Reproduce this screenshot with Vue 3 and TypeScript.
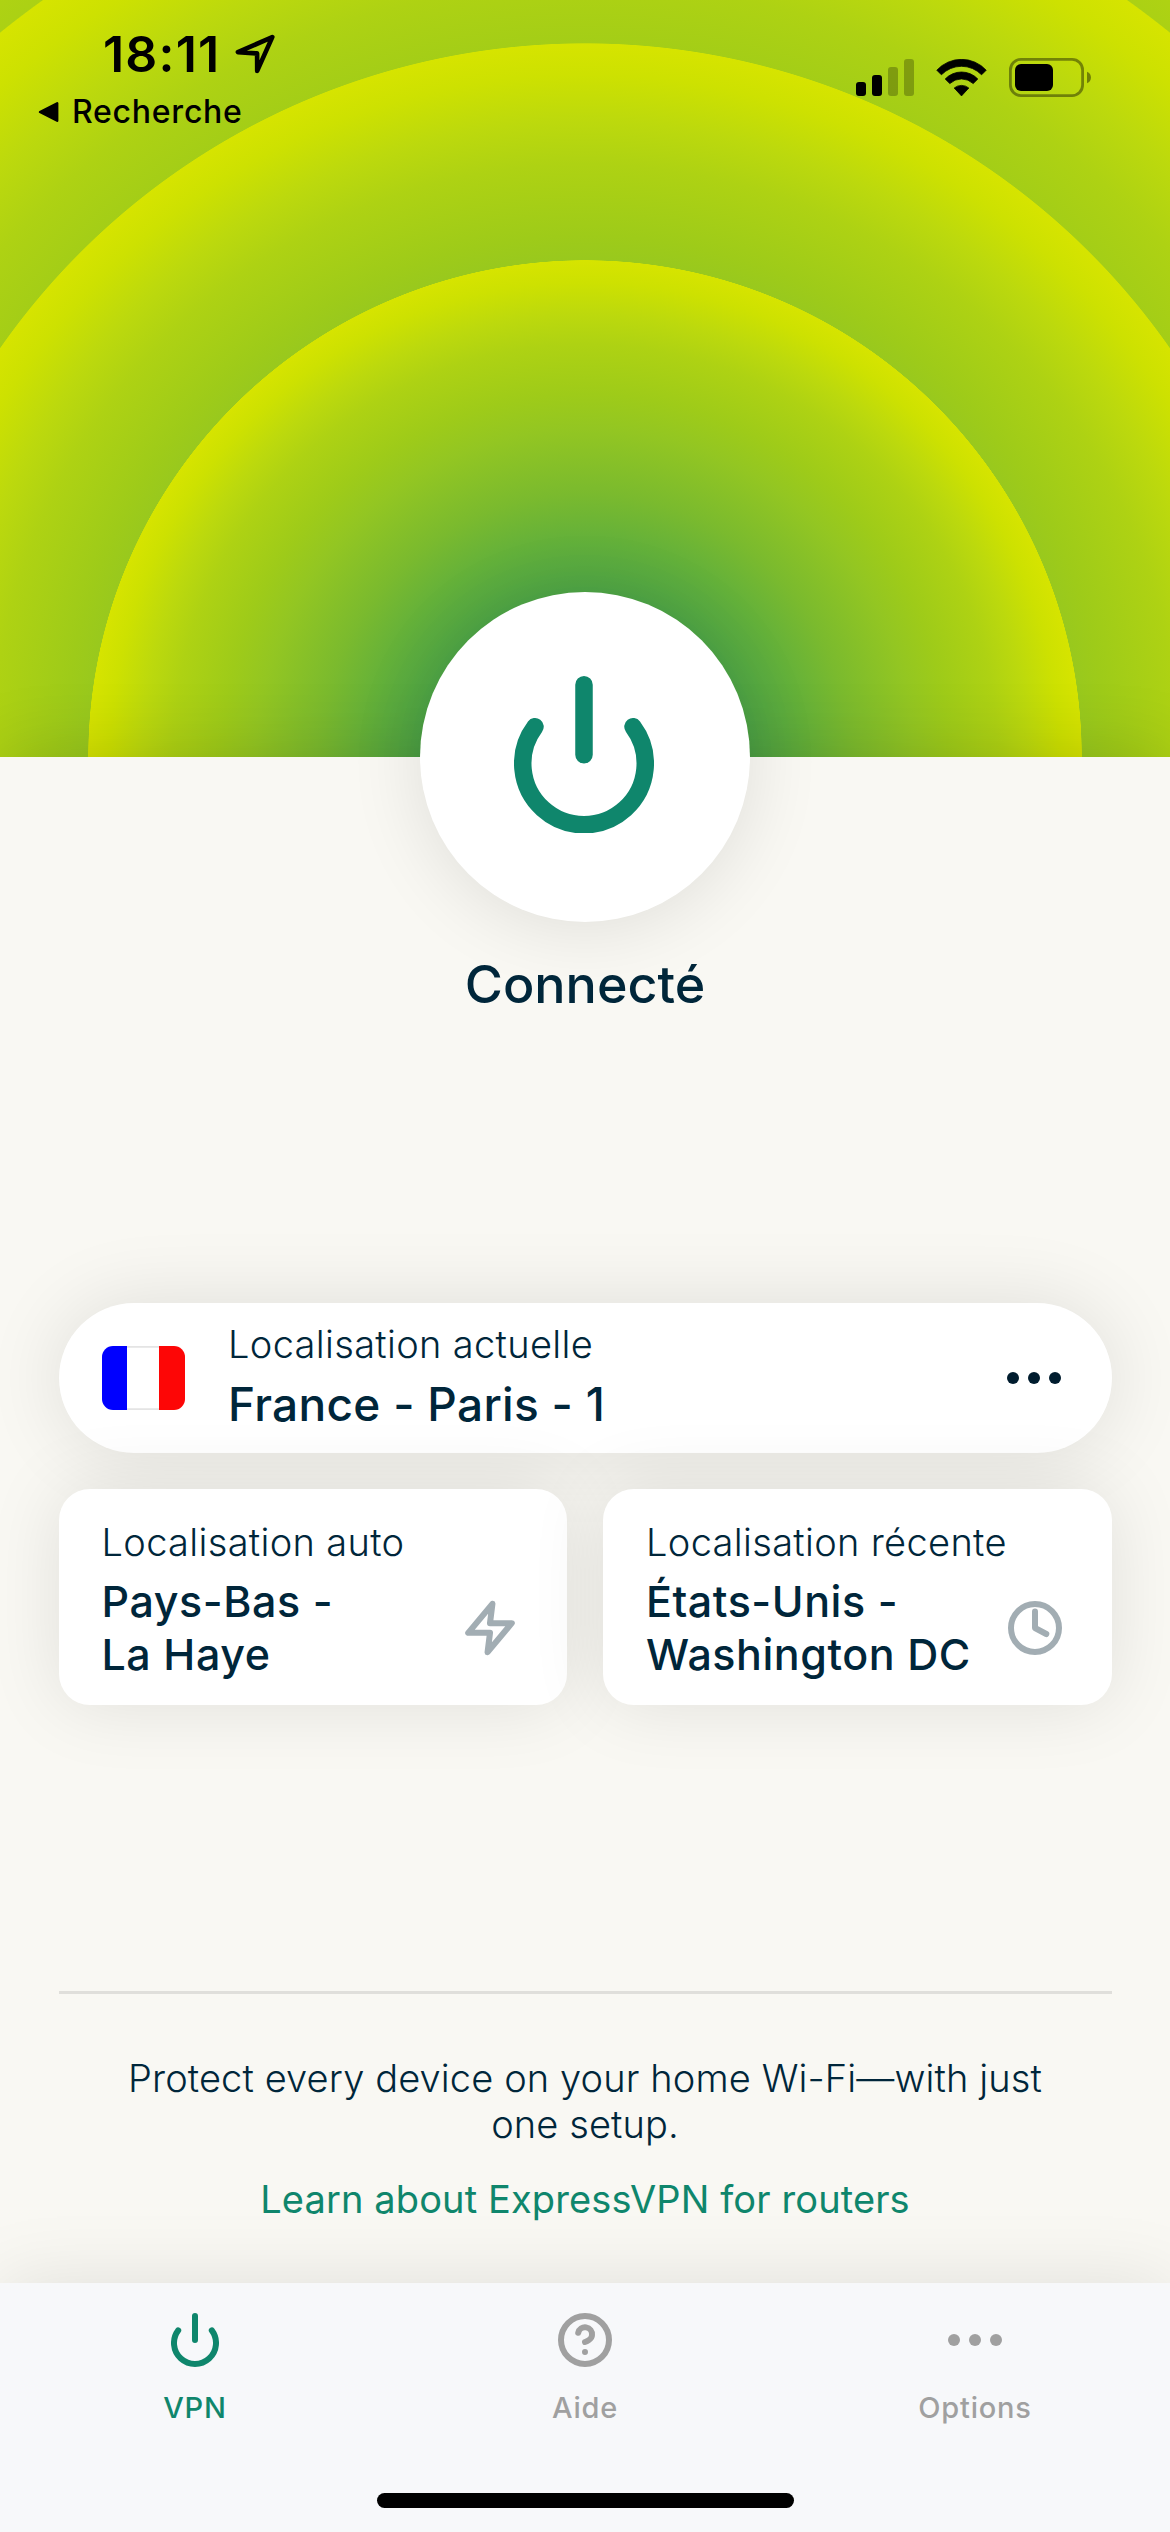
<script setup lang="ts">
interface Shortcut {
  label: string
  lines: string[]
  icon: 'bolt' | 'clock'
}

interface Tab {
  label: string
  icon: 'power' | 'help' | 'dots'
  active: boolean
}

const shortcuts: Shortcut[] = [
  { label: 'Localisation auto', lines: ['Pays-Bas -', 'La Haye'], icon: 'bolt' },
  { label: 'Localisation récente', lines: ['États-Unis -', 'Washington DC'], icon: 'clock' },
]

const tabs: Tab[] = [
  { label: 'VPN', icon: 'power', active: true },
  { label: 'Aide', icon: 'help', active: false },
  { label: 'Options', icon: 'dots', active: false },
]
</script>

<template>
  <div class="screen">
    <header class="hero">
      <div class="status-left">
        <div class="clock-row">
          <span class="time">18:11</span>
          <svg class="arrow" width="44" height="44" viewBox="0 0 44 44">
            <path d="M39.3 5.1 4.9 20.2 24.1 21.4 24.2 38.9Z" fill="none" stroke="#000" stroke-width="4.6" stroke-linejoin="round" />
          </svg>
        </div>
        <div class="back-row">
          <svg width="22" height="22" viewBox="0 0 22 22">
            <path d="M2 11 19.2 2.2V19.8Z" fill="#000" stroke="#000" stroke-width="2.4" stroke-linejoin="round" />
          </svg>
          <span class="back">Recherche</span>
        </div>
      </div>
      <div class="status-right">
        <svg width="58" height="37" viewBox="0 0 58 37">
          <rect x="0" y="23" width="10" height="14" rx="3" />
          <rect x="16" y="16" width="10" height="21" rx="3" />
          <rect x="32" y="8" width="10" height="29" rx="3" opacity=".25" />
          <rect x="48" y="0" width="10" height="37" rx="3" opacity=".25" />
        </svg>
        <svg class="wifi" width="51" height="38" viewBox="0 0 51 38">
          <path d="M.8 11.2A33.5 33.5 0 0 1 50.2 11.2L45.6 15.8A28 28 0 0 0 5.4 15.8Z" stroke="#000" stroke-width=".8" stroke-linejoin="round" />
          <path d="M9.2 20A22.5 22.5 0 0 1 41.8 20L37.2 24.6A17 17 0 0 0 13.8 24.6Z" stroke="#000" stroke-width=".8" stroke-linejoin="round" />
          <path d="M18.2 29A11.5 11.5 0 0 1 32.8 29L25.5 36.9Z" stroke="#000" stroke-width=".8" stroke-linejoin="round" />
        </svg>
        <svg class="battery" width="82" height="39" viewBox="0 0 82 39">
          <rect x="1.4" y="1.4" width="72.2" height="36.2" rx="10.5" fill="none" stroke="#000" stroke-opacity=".4" stroke-width="2.8" />
          <rect x="6" y="6" width="38" height="27" rx="6" />
          <path d="M78 13.7C83.3 15.5 83.3 23.5 78 25.3Z" opacity=".42" />
        </svg>
      </div>
    </header>

    <main class="body">
      <button class="connect" type="button" aria-label="VPN">
        <svg width="140" height="157.5" viewBox="0 0 48 54">
          <path d="M24 3V27M7.2 17.4A21 21 0 1 0 40.8 17.4" />
        </svg>
      </button>
      <h1 class="state">Connecté</h1>

      <section class="current">
        <svg class="flag" width="83" height="64" viewBox="0 0 83 64">
          <rect width="83" height="64" rx="11" fill="#fff" />
          <path d="M25 0H57V1.8H25ZM25 62.2H57V64H25Z" fill="#e4e4e4" />
          <path d="M25 0H11A11 11 0 0 0 0 11V53A11 11 0 0 0 11 64H25Z" fill="#00f" />
          <path d="M57 0H72A11 11 0 0 1 83 11V53A11 11 0 0 1 72 64H57Z" fill="#fd0606" />
        </svg>
        <div class="current-text">
          <div class="label">Localisation actuelle</div>
          <div class="current-name">France - Paris - 1</div>
        </div>
        <svg class="more" width="54" height="12" viewBox="0 0 54 12">
          <circle cx="6" cy="6" r="6" />
          <circle cx="27" cy="6" r="6" />
          <circle cx="48" cy="6" r="6" />
        </svg>
      </section>

      <div class="shortcuts">
        <section v-for="s in shortcuts" :key="s.label" class="card">
          <div class="label">{{ s.label }}</div>
          <div class="card-row">
            <div class="card-name">
              <div v-for="line in s.lines" :key="line">{{ line }}</div>
            </div>
            <svg v-if="s.icon === 'bolt'" class="card-icon card-bolt" width="58" height="58" viewBox="0 0 24 24" stroke-width="2.5">
              <path d="M13 2 3 14H12L11 22 21 10H12Z" />
            </svg>
            <svg v-else class="card-icon" width="54" height="54" viewBox="0 0 54 54" stroke-width="6">
              <circle cx="27" cy="27" r="24" />
              <path d="M27 10.5V27L38.3 33" />
            </svg>
          </div>
        </section>
      </div>

      <hr class="rule" />
      <p class="promo">
        Protect every device on your home Wi-Fi—with just<br />
        one setup.
      </p>
      <a class="learn">Learn about ExpressVPN for routers</a>
    </main>

    <nav class="tabs">
      <div v-for="t in tabs" :key="t.label" class="tab" :class="{ active: t.active }">
        <svg v-if="t.icon === 'power'" width="48" height="54" viewBox="0 0 48 54">
          <path d="M24 3V27M7.2 17.4A21 21 0 1 0 40.8 17.4" />
        </svg>
        <svg v-else-if="t.icon === 'help'" width="54" height="54" viewBox="0 0 54 54">
          <circle cx="27" cy="27" r="24" />
          <path d="M20.2 19.8A7 7 0 0 1 34 22C34 26.8 27 29 27 29M27 39V39.01" />
        </svg>
        <svg v-else class="dots" width="54" height="54" viewBox="0 0 54 54">
          <circle cx="6" cy="27" r="6" />
          <circle cx="27" cy="27" r="6" />
          <circle cx="48" cy="27" r="6" />
        </svg>
        <span class="tab-label">{{ t.label }}</span>
      </div>
      <div class="home-bar"></div>
    </nav>
  </div>
</template>

<style>
html,
body {
  margin: 0;
  background: #f9f8f3;
}
</style>

<style scoped>
.screen {
  width: 1170px;
  height: 2532px;
  display: flex;
  flex-direction: column;
  overflow: hidden;
  font-family: Inter, "Liberation Sans", sans-serif;
  color: #00263a;
  background: #f9f8f3;
}

.screen svg {
  display: block;
  flex: none;
}

.hero {
  --stops: #0f866c 0%, #36984f 20%, #50a645 34%, #62b03b 43%, #7aba2e 53%, #93c622 66%, #9ecb19 73%, #aed213 83%, #bcd90d 89%, #cde101 95.5%, #d6e400 99.9%, transparent 100%;
  height: 757px;
  flex: none;
  display: flex;
  justify-content: space-between;
  align-items: flex-start;
  background:
    radial-gradient(circle 497px at 50% 100%, var(--stops)),
    radial-gradient(circle 714px at 50% 100%, var(--stops)),
    radial-gradient(circle 931.5px at 50% 100%, var(--stops)),
    radial-gradient(circle 1148px at 50% 100%, var(--stops));
}

.status-left {
  padding-top: 24px;
}

.clock-row {
  display: flex;
  align-items: center;
  height: 60px;
  padding-left: 103px;
}

.time {
  width: 130px;
  font-size: 50px;
  line-height: 60px;
  font-weight: 600;
  letter-spacing: 1.2px;
  color: #000;
}

.back-row {
  display: flex;
  align-items: center;
  margin-top: 8px;
  padding-left: 38px;
}

.back {
  margin-left: 12px;
  font-size: 32px;
  line-height: 40px;
  font-weight: 500;
  letter-spacing: 0.75px;
  color: #000;
}

.status-right {
  display: flex;
  align-items: flex-start;
  padding: 59px 79px 0 0;
}

.wifi {
  margin-left: 22px;
}

.battery {
  margin: -1px 0 0 22px;
}

.body {
  position: relative;
  flex: 1;
  display: flex;
  flex-direction: column;
  align-items: center;
  background: #f9f8f3;
  box-shadow: 0 0 72px rgba(0, 0, 0, 0.16);
}

.connect {
  width: 330px;
  height: 330px;
  margin: -165px 0 0;
  padding: 0 2px 5px 0;
  border: 0;
  border-radius: 50%;
  flex: none;
  display: flex;
  align-items: center;
  justify-content: center;
  background: #fff;
  box-shadow: 0 5px 76px rgba(0, 0, 0, 0.11);
  color: #0f866c;
}

.connect path,
.tab path,
.tab circle {
  fill: none;
  stroke: currentColor;
  stroke-width: 6;
  stroke-linecap: round;
}

.state {
  margin: 31px 0 0;
  font-size: 52px;
  line-height: 64px;
  font-weight: 500;
}

.current {
  width: 1053px;
  height: 150px;
  margin-top: 286px;
  padding: 0 51px 0 43px;
  box-sizing: border-box;
  border-radius: 75px;
  flex: none;
  display: flex;
  align-items: center;
  background: #fff;
  box-shadow: 0 0 80px rgba(0, 10, 10, 0.11);
}

.current-text {
  flex: 1;
  margin: -3px 0 0 43.5px;
}

.label {
  font-size: 38px;
  line-height: 46px;
  font-weight: 300;
  letter-spacing: 0.33px;
  white-space: nowrap;
}

.current-name {
  margin-top: 9px;
  font-size: 46px;
  line-height: 56px;
  font-weight: 500;
  letter-spacing: 0.3px;
}

.more {
  fill: #001c2e;
}

.shortcuts {
  width: 1053px;
  margin-top: 36px;
  display: flex;
  gap: 36px;
}

.card {
  flex: 1 1 0;
  min-width: 0;
  height: 216px;
  box-sizing: border-box;
  padding: 30px 50px 0 43px;
  border-radius: 31px;
  background: #fff;
  box-shadow: 0 0 74px rgba(0, 10, 10, 0.1);
}

.card-row {
  display: flex;
  justify-content: space-between;
  align-items: center;
  margin-top: 10px;
}

.card-name {
  font-size: 43px;
  line-height: 53px;
  font-weight: 500;
  letter-spacing: 0.55px;
  white-space: nowrap;
}

.card-icon {
  fill: none;
  stroke: #a2adb3;
  stroke-linecap: round;
  stroke-linejoin: round;
}

.card-bolt {
  margin-right: -2px;
}

.rule {
  width: 1053px;
  height: 3px;
  margin: 286px 0 0;
  border: 0;
  flex: none;
  background: #e0dfdb;
}

.promo {
  margin: 61px 0 0;
  font-size: 38px;
  line-height: 46px;
  font-weight: 300;
  letter-spacing: 0.12px;
  text-align: center;
  white-space: nowrap;
}

.learn {
  margin-top: 29px;
  font-size: 38px;
  line-height: 46px;
  letter-spacing: 0.12px;
  color: #0f866c;
}

.tabs {
  position: relative;
  height: 249px;
  box-sizing: border-box;
  padding-top: 30px;
  flex: none;
  display: flex;
  align-items: flex-start;
  background: #f7f8fa;
  box-shadow: 0 0 72px rgba(0, 0, 0, 0.1);
}

.tab {
  flex: 1;
  display: flex;
  flex-direction: column;
  align-items: center;
  color: #a0a0a0;
}

.tab.active {
  color: #0f866c;
}

.tab .dots circle {
  fill: currentColor;
  stroke: none;
}

.tab-label {
  margin-top: 22.5px;
  font-size: 29px;
  line-height: 36px;
  font-weight: 500;
  letter-spacing: 0.8px;
}

.home-bar {
  position: absolute;
  left: 377px;
  bottom: 24px;
  width: 417px;
  height: 15px;
  border-radius: 8px;
  background: #000;
}
</style>
